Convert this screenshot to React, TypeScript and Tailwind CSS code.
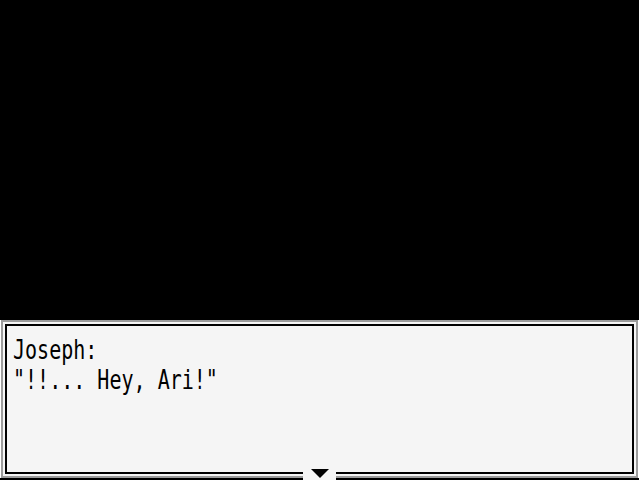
export default function App() {
  return (
    <div className="w-[639px] h-[480px] bg-black flex flex-col justify-end pb-[2px]">
      <div className="relative h-[158px] w-[639px] border-x border-white">
        <div className="h-full border-2 border-[#9c9c9c] bg-[#f5f5f5] p-[2px]">
          <div className="h-full border-2 border-black pl-[6px] pt-[9px]">
            <div
              className="origin-left scale-x-[0.77] text-[26px] leading-[30px] text-black whitespace-pre"
              style={{ fontFamily: '"DejaVu Sans Mono", monospace' }}
            >
              <div>Joseph:</div>
              <div>"!!... Hey, Ari!"</div>
            </div>
          </div>
        </div>
        <div className="absolute bottom-[-2px] left-[302px] w-[33px] h-[13px] bg-[#f5f5f5] flex justify-center pt-[2px]">
          <svg width="18" height="10" viewBox="0 0 18 10">
            <polygon points="0,0 18,0 9,9" fill="black" />
          </svg>
        </div>
      </div>
    </div>
  );
}
